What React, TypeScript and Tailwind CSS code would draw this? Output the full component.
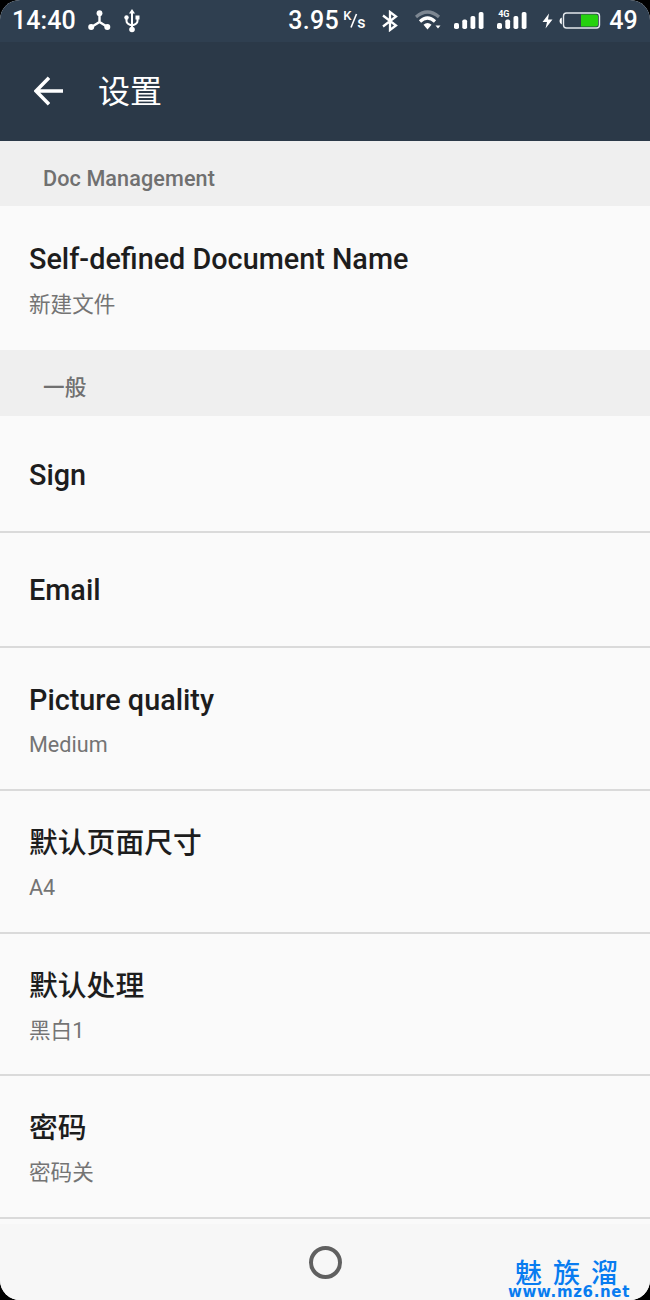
import clsx from 'clsx'

const groups = [
    {
        title: 'Doc Management',
        items: [{ name: 'Self-defined Document Name', value: '新建文件', height: 'h-36' }],
    },
    {
        title: '一般',
        items: [
            { name: 'Sign', value: '', height: 'h-[117px]' },
            { name: 'Email', value: '', height: 'h-[115px]' },
            { name: 'Picture quality', value: 'Medium', height: 'h-[143px]' },
            { name: '默认页面尺寸', value: 'A4', height: 'h-[143px]' },
            { name: '默认处理', value: '黑白1', height: 'h-[142px]' },
            { name: '密码', value: '密码关', height: 'h-[143px]' },
        ],
    },
]

function SignalBars() {
    return (
        <svg className="h-[22px] w-[31px]" viewBox="0 0 31 22">
            <rect x="0" y="13" width="5" height="6" rx="1.8" fill="white" />
            <rect x="8.3" y="9.5" width="4.8" height="9.5" rx="1.8" fill="white" />
            <rect x="16.5" y="6" width="4.8" height="13" rx="1.8" fill="white" />
            <rect x="24.7" y="2" width="4.8" height="17" rx="1.8" fill="white" />
        </svg>
    )
}

function StatusBar() {
    return (
        <div className="flex h-[42px] shrink-0 items-center bg-[#2f3f50] pl-3 pr-[12px] text-[25px] font-medium leading-[42px] text-white">
            <span className="w-[76px] tracking-[0.1px]">14:40</span>
            {/* hub */}
            <svg className="h-[22px] w-[24px]" viewBox="0 0 24 22">
                <path d="M11.5 4v8M11.5 12L3.5 17M11.5 12l8 5" stroke="white" strokeWidth="2.4" fill="none" />
                <circle cx="11.5" cy="3.2" r="2.9" fill="white" />
                <circle cx="3.2" cy="17" r="3" fill="white" />
                <circle cx="19.3" cy="17" r="3" fill="white" />
            </svg>
            {/* usb */}
            <svg className="ml-[11px] h-[24px] w-[18px]" viewBox="0 0 18 24">
                <path d="M9 3v18M3.5 7v5q0 3 5.5 4.5M14.5 7v5q0 3-5.5 4.5" stroke="white" strokeWidth="2" fill="none" />
                <path d="M9 0l3 4.5H6z" fill="white" />
                <circle cx="9" cy="20.5" r="2.8" fill="white" />
                <circle cx="3.5" cy="8.5" r="2.2" fill="white" />
                <path d="M12.5 6.5h4v4h-4z" fill="white" />
            </svg>
            <div className="flex-1" />
            <span className="w-[55px] tracking-[0.3px]">3.95</span>
            <span className="relative h-[42px] w-[39px] leading-none">
                <span className="absolute left-0 top-[9px] text-[13px]">K</span>
                <svg className="absolute left-[7px] top-[13px] h-4 w-2" viewBox="0 0 8 16">
                    <path d="M1 14.5L6.5 1" stroke="white" strokeWidth="1.6" />
                </svg>
                <span className="absolute left-[14px] top-[15px] text-[16px]">s</span>
            </span>
            <svg className="h-[22px] w-[16px]" viewBox="0 0 16 22">
                <path d="M1 5.5L14 15.5 8 20V2L14 6.5 1 16.5" stroke="white" strokeWidth="2.3" fill="none" />
            </svg>
            <svg className="ml-[17px] h-[22px] w-[27px]" viewBox="0 0 27 22">
                <path d="M1 7Q12.5-3 24 7" stroke="#7d8792" strokeWidth="3.2" fill="none" />
                <path d="M5 11.5Q12.5 4.5 20 11.5" stroke="white" strokeWidth="3.2" fill="none" />
                <path d="M8.5 14.8q4-3.5 8 0l-4 4.7z" fill="white" />
                <path d="M20.5 15.5h5L23 18.5z" fill="white" />
            </svg>
            <div className="ml-[12px]">
                <SignalBars />
            </div>
            <div className="relative ml-[12px]">
                <SignalBars />
                <span className="absolute left-px top-0 text-[9px] font-bold leading-[9px]">4G</span>
            </div>
            <svg className="ml-[14px] h-[16px] w-[11px]" viewBox="0 0 11 16">
                <path d="M7 0.5L0.5 9H5L3.5 15.5 10.5 6.5H6z" fill="white" />
            </svg>
            <svg className="ml-[6px] h-[18px] w-[43px]" viewBox="0 0 43 18">
                <path d="M2.8 5.5v7Q0.5 12 0.5 9T2.8 5.5z" fill="white" />
                <rect x="4.5" y="1" width="36" height="15" rx="3" stroke="#e4e8ec" strokeWidth="1.4" fill="none" />
                <path d="M22 2.5H37q2 0 2 2v8q0 2-2 2H22z" fill="#25d10f" />
            </svg>
            <span className="ml-[7px] tracking-[0.2px]">49</span>
        </div>
    )
}

export default function App() {
    return (
        <div className="h-[1300px] w-[650px] bg-black font-['Roboto','Noto_Sans_CJK_SC',sans-serif]">
            <div className="flex h-full flex-col overflow-hidden rounded-[20px] bg-[#fafafa]">
                <StatusBar />

                <header className="flex h-[99px] shrink-0 items-center bg-[#2b3948] pl-[34px] text-white">
                    <svg className="mb-[2px] h-[30px] w-[30px]" viewBox="0 0 30 30">
                        <path d="M29 15H3M15 1.8L2 15l13 13.2" stroke="white" strokeWidth="3.5" fill="none" />
                    </svg>
                    <h1 className="ml-[34px] text-[32px] leading-10">设置</h1>
                </header>

                <main className="h-[1083px] shrink-0">
                    {groups.map((group, g) => (
                        <section key={group.title}>
                            <h2
                                className={clsx(
                                    'flex items-center bg-[#efefef] pl-[43px] pt-[10px] text-[21.6px] font-medium leading-7 tracking-[0.1px] text-[#707070]',
                                    g === 0 ? 'h-[65px]' : 'h-[66px]',
                                )}
                            >
                                {group.title}
                            </h2>
                            {group.items.map((item, i) => (
                                <div
                                    key={item.name}
                                    className={clsx(
                                        'flex flex-col px-[29px]',
                                        item.height,
                                        group.items.length > 1 && 'border-b-2 border-[#dadada]',
                                        !item.value && (i === 0 ? 'pt-[41px]' : 'pt-[39px]'),
                                        item.value && (g === 0 ? 'pt-[35px]' : 'pt-[34px]'),
                                    )}
                                >
                                    <div className="text-[28.8px] font-medium leading-9 text-[#1d1d1d]">{item.name}</div>
                                    {item.value && (
                                        <div
                                            className={clsx(
                                                'text-[21.6px] leading-7 text-[#747474]',
                                                g === 0 ? 'mt-[14px]' : 'mt-[13px]',
                                            )}
                                        >
                                            {item.value}
                                        </div>
                                    )}
                                </div>
                            ))}
                        </section>
                    ))}
                </main>

                <footer className="relative flex flex-1 items-center justify-center bg-[#f7f7f7]">
                    <div className="h-[33px] w-[33px] rounded-full border-4 border-[#606060]" />
                    <div className="absolute bottom-0 right-[18px] flex w-[124px] flex-col text-[#087cf0]">
                        <div className="ml-[7px] h-[27px] whitespace-nowrap text-[27px] font-medium leading-[33px] tracking-[11px]">魅族溜</div>
                        <div className="whitespace-nowrap font-['DejaVu_Sans',sans-serif] text-[15px] font-bold leading-[15px] tracking-[0.65px]">www.mz6.net</div>
                    </div>
                </footer>
            </div>
        </div>
    )
}
